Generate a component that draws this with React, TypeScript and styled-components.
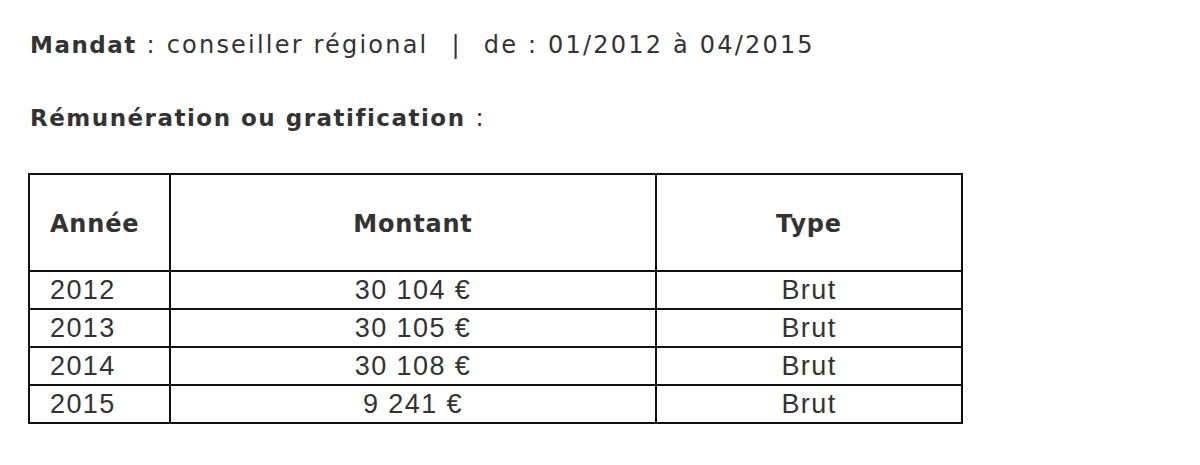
import styled, { createGlobalStyle } from "styled-components";

const GlobalStyle = createGlobalStyle`
  body {
    margin: 0;
    background: #ffffff;
    color: #333333;
    font-family: "DejaVu Sans", "Liberation Sans", sans-serif;
  }
`;

interface Row {
  year: string;
  amount: string;
  type: string;
}

const rows: Row[] = [
  { year: "2012", amount: "30 104 €", type: "Brut" },
  { year: "2013", amount: "30 105 €", type: "Brut" },
  { year: "2014", amount: "30 108 €", type: "Brut" },
  { year: "2015", amount: "9 241 €", type: "Brut" },
];

export default function App() {
  return (
    <Page>
      <GlobalStyle />
      <InfoLine>
        <strong>Mandat</strong> : conseiller régional
        <Separator>|</Separator>
        de : 01/2012 à 04/2015
      </InfoLine>
      <InfoLine>
        <strong>Rémunération ou gratification</strong> :
      </InfoLine>
      <Table>
        <colgroup>
          <col style={{ width: 141 }} />
          <col style={{ width: 486 }} />
          <col style={{ width: 306 }} />
        </colgroup>
        <thead>
          <tr>
            <HeadCell $align="left">Année</HeadCell>
            <HeadCell $align="center">Montant</HeadCell>
            <HeadCell $align="center">Type</HeadCell>
          </tr>
        </thead>
        <tbody>
          {rows.map((r) => (
            <tr key={r.year}>
              <Cell $align="left">{r.year}</Cell>
              <Cell $align="center">{r.amount}</Cell>
              <Cell $align="center">{r.type}</Cell>
            </tr>
          ))}
        </tbody>
      </Table>
    </Page>
  );
}

const Page = styled.div`
  padding: 30px 0 0 30px;
  width: 1200px;
  height: 465px;
  box-sizing: border-box;
`;

const InfoLine = styled.p`
  margin: 0 0 43px;
  font-size: 24px;
  line-height: 30px;
  letter-spacing: 2.2px;
  color: #333;

  strong {
    font-size: 23px;
    letter-spacing: 1.5px;
    font-weight: bold;
  }
`;

const Separator = styled.span`
  margin: 0 22px 0 23px;
`;

const Table = styled.table`
  margin: -3px 0 0 -2px;
  border-collapse: collapse;
  table-layout: fixed;
  width: 933px;
  border: 2px solid #111;
`;

const HeadCell = styled.th<{ $align: string }>`
  border: 2px solid #111;
  height: 93px;
  padding: ${(p) => (p.$align === "left" ? "2px 0 0 20px" : "2px 0 0")};
  text-align: ${(p) => p.$align};
  font-family: "DejaVu Sans", sans-serif;
  font-size: 24px;
  letter-spacing: 0.8px;
  font-weight: bold;
  color: #333;
`;

const Cell = styled.td<{ $align: string }>`
  border: 2px solid #111;
  height: 36px;
  padding: ${(p) => (p.$align === "left" ? "0 0 0 20px" : "0")};
  text-align: ${(p) => p.$align};
  font-family: "Liberation Sans", sans-serif;
  font-size: 27px;
  line-height: 36px;
  letter-spacing: 1.4px;
  color: #333;
`;
